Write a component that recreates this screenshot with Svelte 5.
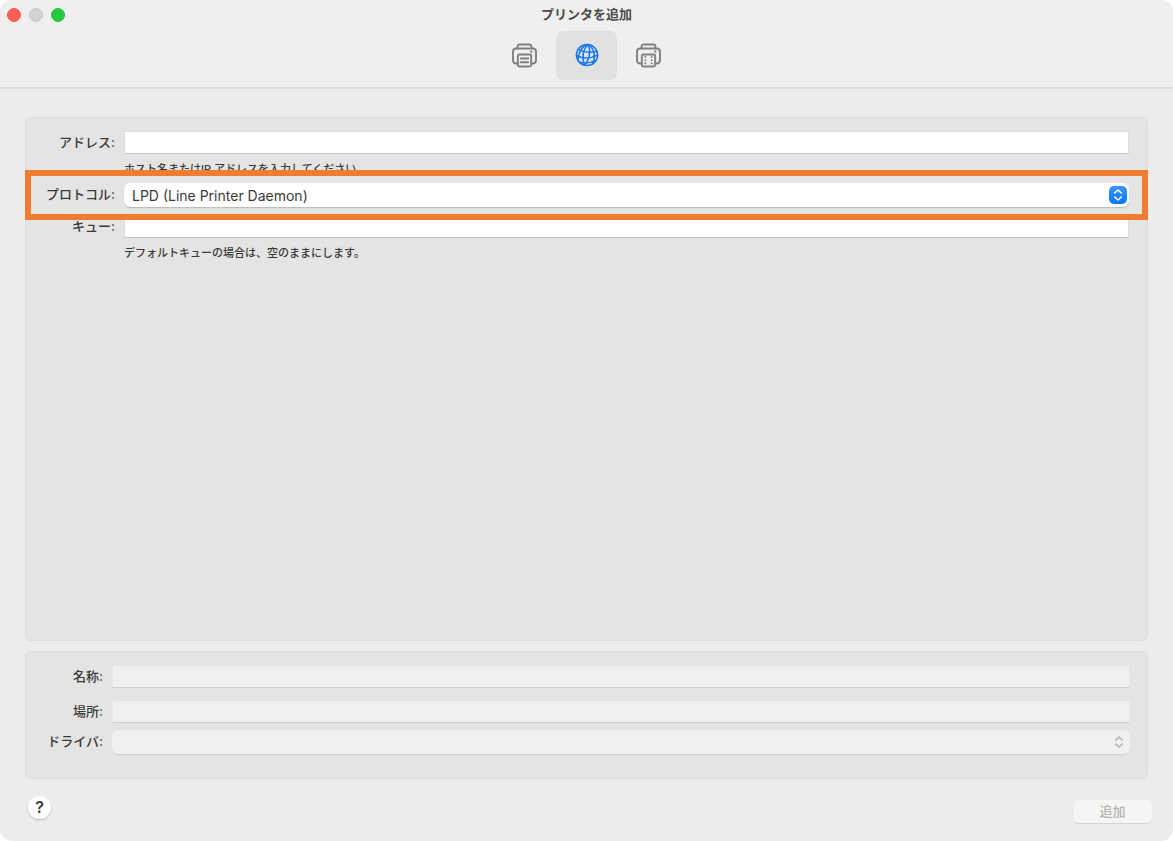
<script lang="ts">
  type Tab = 'default' | 'ip' | 'windows';

  const tabs: { id: Tab; label: string }[] = [
    { id: 'default', label: 'デフォルト' },
    { id: 'ip', label: 'IP' },
    { id: 'windows', label: 'Windows' }
  ];

  let selected: Tab = $state('ip');
  let address = $state('');
  let protocol = $state('lpd');
  let queue = $state('');
</script>

{#snippet printer()}
  <path d="M5.5 5.5V3.9Q5.5 1.5 7.9 1.5H17.1Q19.5 1.5 19.5 3.9V5.5" />
  <path d="M5.8 20.5H4.2Q1 20.5 1 17.3V8.7Q1 5.5 4.2 5.5H20.8Q24 5.5 24 8.7V17.3Q24 20.5 20.8 20.5H19.2" />
  <rect x="5.8" y="11.5" width="13.4" height="12" rx="1.5" />
  <circle class="dot" cx="19.3" cy="8.6" r="1.2" />
{/snippet}

{#snippet chevrons()}
  <svg viewBox="0 0 18 18" aria-hidden="true">
    <path d="M5.7 7L9 4L12.3 7M5.7 11L9 14L12.3 11" />
  </svg>
{/snippet}

<div class="window">
  <header>
    <div class="titlebar">
      <div class="lights">
        <button class="light close" aria-label="閉じる"></button>
        <button class="light minimize" aria-label="しまう" disabled></button>
        <button class="light zoom" aria-label="拡大"></button>
      </div>
      <h1>プリンタを追加</h1>
    </div>
    <nav>
      {#each tabs as tab}
        <button
          class="tab"
          class:active={selected === tab.id}
          aria-label={tab.label}
          aria-pressed={selected === tab.id}
          onclick={() => (selected = tab.id)}
        >
          <svg viewBox="0 0 26 25" aria-hidden="true">
            {#if tab.id === 'ip'}
              <circle cx="13" cy="12" r="10.6" />
              <path d="M14.5 1.5C9 6 7.5 14 10.5 22.3M14.5 1.5C16.5 8 16 16 10.5 22.3M14.5 1.5C20.5 6 22 14 18.5 21" />
              <path d="M14.5 1.5C8.5 3 4.5 8 4 17.5" />
              <path d="M4.5 6C9 9.5 17 9.5 23 8.2M2.6 12.5C9 16 17 15.5 23.5 12.2M5 19C10 20.7 17 20 21.5 17.5" />
            {:else if tab.id === 'default'}
              {@render printer()}
              <path d="M8.8 15.5H16.2M8.8 19.3H16.2" />
            {:else}
              {@render printer()}
              <path class="film" d="M9.3 13.2V22.5M15.7 13.2V22.5" />
            {/if}
          </svg>
        </button>
      {/each}
    </nav>
  </header>

  <main>
    <section class="panel connection">
      <div class="row">
        <label for="address">アドレス:</label>
        <input id="address" type="text" aria-describedby="address-hint" bind:value={address} />
      </div>
      <p class="hint" id="address-hint">ホスト名またはIP アドレスを入力してください。</p>

      <div class="row highlight">
        <label for="protocol">プロトコル:</label>
        <div class="select">
          <select id="protocol" bind:value={protocol}>
            <option value="lpd">LPD (Line Printer Daemon)</option>
            <option value="ipp">IPP (Internet Printing Protocol)</option>
            <option value="socket">HP Jetdirect (Socket)</option>
          </select>
          {@render chevrons()}
        </div>
      </div>

      <div class="row queue">
        <label for="queue">キュー:</label>
        <input id="queue" type="text" aria-describedby="queue-hint" bind:value={queue} />
      </div>
      <p class="hint" id="queue-hint">デフォルトキューの場合は、空のままにします。</p>
    </section>

    <section class="panel details">
      <div class="row">
        <label for="name">名称:</label>
        <input id="name" type="text" disabled />
      </div>
      <div class="row">
        <label for="location">場所:</label>
        <input id="location" type="text" disabled />
      </div>
      <div class="row driver">
        <label for="driver">ドライバ:</label>
        <div class="select">
          <select id="driver" disabled></select>
          {@render chevrons()}
        </div>
      </div>
    </section>
  </main>

  <footer>
    <button class="help" aria-label="ヘルプ">?</button>
    <button class="add" disabled>追加</button>
  </footer>
</div>

<style>
  :global(body) {
    background: #fff;
  }

  .window {
    display: flex;
    flex-direction: column;
    min-height: 100vh;
    border-radius: 12px;
    overflow: hidden;
    background: #ececea;
    color: #3a3a3a;
    font-family: Inter, 'Noto Sans CJK JP', sans-serif;
    font-size: 13px;
    font-weight: 500;
  }

  button,
  input,
  select {
    box-sizing: border-box;
    margin: 0;
    padding: 0;
    border: 0;
    color: inherit;
    font: inherit;
  }

  header {
    padding-bottom: 7px;
    border-bottom: 2px solid #dcdcda;
    background: #efefed;
  }

  .titlebar {
    display: grid;
    grid-template-columns: 1fr auto 1fr;
    align-items: center;
    height: 30px;
  }

  .lights {
    display: flex;
    gap: 8px;
    padding-left: 7px;
  }

  .light {
    width: 14px;
    height: 14px;
    border: 1px solid #f0574f;
    border-radius: 50%;
    background: #ff5f57;
  }

  .minimize {
    border-color: #c4c4c2;
    background: #d3d3d1;
  }

  .zoom {
    border-color: #26bd3c;
    background: #28c840;
  }

  h1 {
    margin: 0;
    padding-bottom: 2px;
    color: #4a4a4a;
    font-size: 13px;
    font-weight: 700;
    line-height: 20px;
  }

  nav {
    display: flex;
    justify-content: center;
    gap: 1px;
    padding-top: 1px;
  }

  .tab {
    display: flex;
    align-items: center;
    justify-content: center;
    width: 61px;
    height: 49px;
    border-radius: 7px;
    background: none;
    color: #80807e;
  }

  .tab.active {
    background: #e1e1df;
    color: #1677f2;
  }

  .tab svg {
    width: 26px;
    height: 25px;
    fill: none;
    stroke: currentColor;
    stroke-width: 1.9;
    stroke-linecap: round;
  }

  .tab.active svg {
    stroke-width: 1.5;
  }

  .tab .dot {
    fill: currentColor;
    stroke: none;
  }

  .tab .film {
    stroke-dasharray: 1.6 1.6;
    stroke-linecap: butt;
  }

  main {
    display: flex;
    flex: 1;
    flex-direction: column;
    gap: 10px;
    padding: 28px 25px 0;
  }

  .panel {
    border: 1px solid #dcdcda;
    border-radius: 6px;
    background: #e4e4e2;
  }

  .connection {
    flex: 1;
    padding-top: 13px;
  }

  .details {
    display: flex;
    flex-direction: column;
    gap: 12px;
    padding: 13px 0 24px;
  }

  .row {
    display: flex;
    align-items: center;
    gap: 9px;
    padding-right: 18px;
  }

  .details .row {
    padding-right: 17px;
  }

  label {
    flex: none;
    width: 89px;
    padding-bottom: 2px;
    line-height: 20px;
    text-align: right;
  }

  .details label {
    width: 77px;
  }

  input {
    flex: 1;
    min-width: 0;
    height: 23px;
    padding: 0 6px;
    border: 1px solid #dcdcda;
    border-bottom-color: #c4c4c2;
    border-radius: 0;
    background: #fff;
  }

  input:disabled {
    border-color: #e6e6e4;
    border-bottom-color: #d0d0ce;
    background: #f0f0ee;
  }

  .hint {
    margin: 7px 18px 0 98px;
    font-size: 11px;
    line-height: 16px;
  }

  .highlight {
    position: relative;
    margin-top: 6px;
  }

  .highlight::after {
    content: '';
    position: absolute;
    inset: -13px -1px;
    border: 6px solid #ee7d31;
    pointer-events: none;
  }

  .queue {
    margin-top: 8px;
  }

  .driver {
    margin-top: -5px;
  }

  .select {
    position: relative;
    flex: 1;
  }

  select {
    display: block;
    width: 100%;
    height: 24px;
    padding: 0 28px 0 8px;
    border-radius: 6px;
    background: #fff;
    box-shadow: 0 1px 1px #b8b8b6;
    font-size: 14px;
    font-weight: 400;
    appearance: none;
  }

  select:disabled {
    background: #f0f0ee;
    box-shadow: 0 1px 1px #cdcdcb;
    opacity: 1;
  }

  .select svg {
    position: absolute;
    top: 3px;
    right: 2px;
    width: 18px;
    height: 18px;
    border-radius: 5px;
    background: linear-gradient(#3b96fb, #0a76f5);
    fill: none;
    stroke: #fff;
    stroke-width: 1.6;
    stroke-linecap: round;
    stroke-linejoin: round;
    pointer-events: none;
  }

  .select select:disabled + svg {
    background: none;
    stroke: #b0b0ae;
  }

  footer {
    display: flex;
    align-items: flex-start;
    justify-content: space-between;
    padding: 17px 21px 18px 28px;
  }

  .help {
    width: 23px;
    height: 23px;
    border-radius: 50%;
    background: #fff;
    box-shadow: 0 1px 2px #bbb;
    font-size: 16px;
    font-weight: 600;
    line-height: 23px;
  }

  .add {
    width: 79px;
    height: 23px;
    margin-top: 4px;
    padding-bottom: 2px;
    border-radius: 5px;
    background: #f5f5f3;
    box-shadow: 0 1px 1px #d2d2d0;
    color: #b4b4b2;
    line-height: 20px;
  }
</style>
